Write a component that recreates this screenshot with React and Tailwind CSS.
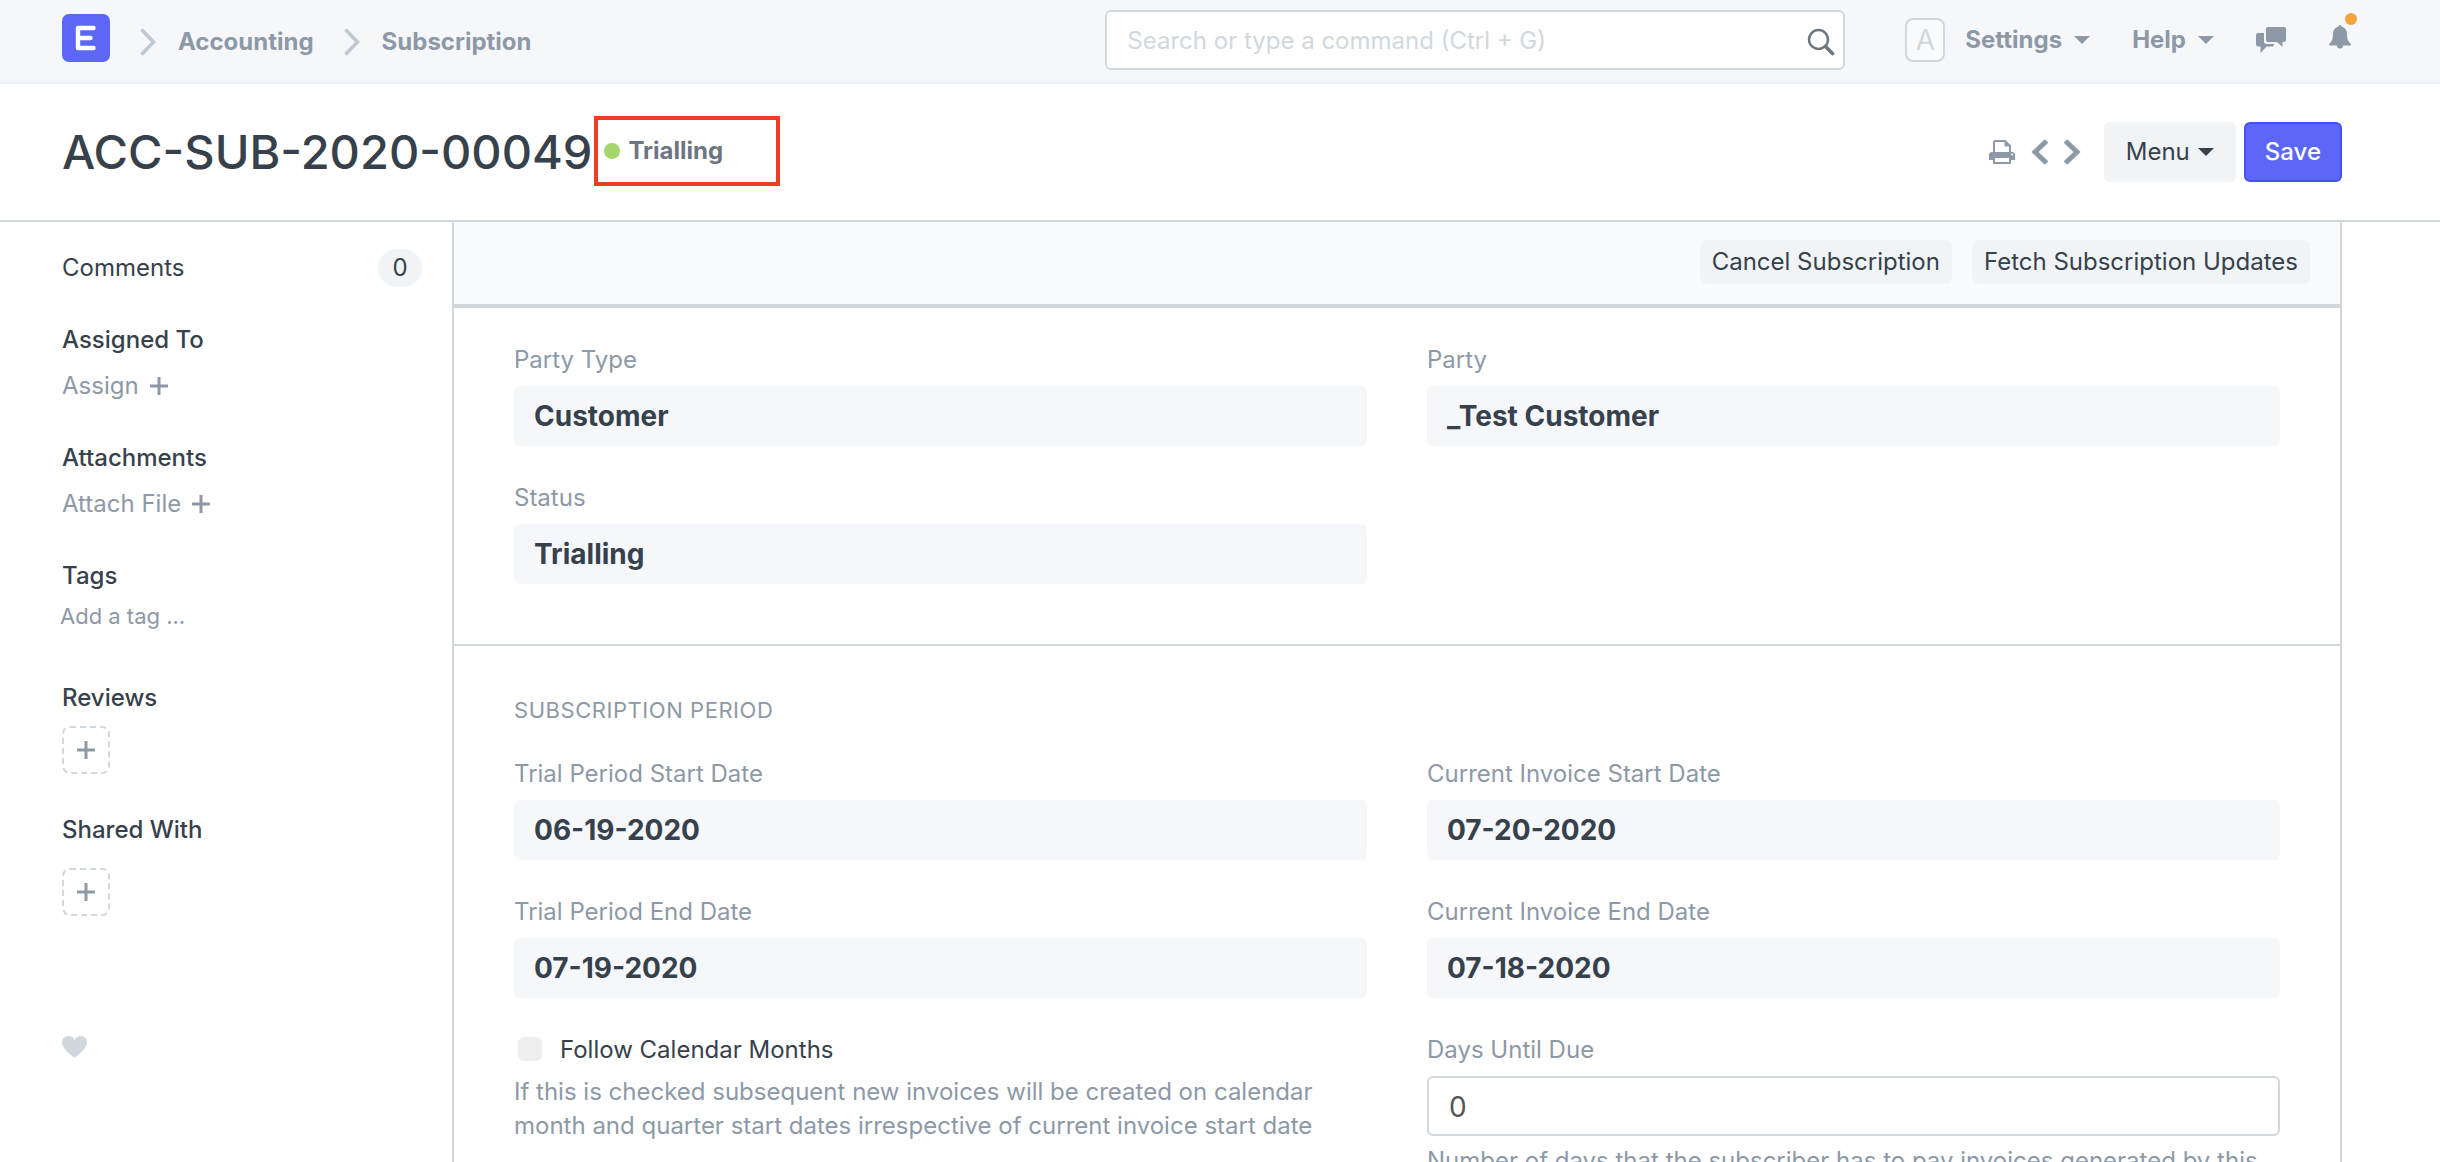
import React from "react";

const Plus = () => (
  <svg viewBox="0 0 18 18" className="size-[18px] text-[#8d99a6]" aria-hidden="true">
    <path d="M9 0v18M0 9h18" stroke="currentColor" strokeWidth="3" />
  </svg>
);

const Caret = () => (
  <svg viewBox="0 0 16 8" className="h-2 w-4" aria-hidden="true">
    <path d="M0 0h16L8 8z" fill="currentColor" />
  </svg>
);

const Crumb = ({ children }) => (
  <>
    <svg viewBox="0 0 16 28" className="h-7 w-4 text-[#c0c9d0]" aria-hidden="true">
      <path d="M1.500 1.500L13.500 14L1.500 26.500" fill="none" stroke="currentColor" strokeWidth="3.6" />
    </svg>
    <a href="#" className="ml-[22px] mr-[30px] font-bold text-[#8d99a6]">{children}</a>
  </>
);

function Navbar() {
  return (
    <header className="flex h-[84px] items-center border-b-2 border-[#ebeff2] bg-[#f5f7fb] pb-0.5 pl-[62px] pr-[89px]">
      <a href="#" aria-label="Home" className="mr-[30px] mb-1">
        <svg viewBox="0 0 48 48" className="size-12">
          <rect width="48" height="48" rx="7" fill="#5c67f7" />
          <path d="M31.500 14H16v20h15.500M16 24h12.500" fill="none" stroke="#fff" strokeWidth="4.4" strokeLinejoin="round" strokeLinecap="round" />
        </svg>
      </a>
      <nav aria-label="Breadcrumb" className="mt-1 flex items-center">
        <Crumb>Accounting</Crumb>
        <Crumb>Subscription</Crumb>
      </nav>
      <div className="relative ml-auto w-[740px]">
        <input
          type="text"
          aria-label="Search"
          placeholder="Search or type a command (Ctrl + G)"
          className="block h-[60px] w-full rounded-md border-2 border-[#d1d8dd] bg-white px-5 placeholder:text-[#d1d8dd]"
        />
        <svg viewBox="0 0 28 28" className="absolute right-2.5 top-[18px] size-7 text-[#6c7680]" aria-hidden="true">
          <circle cx="11.5" cy="11.5" r="9.5" fill="none" stroke="currentColor" strokeWidth="2.4" />
          <path d="M18.5 18.5l7 7" stroke="currentColor" strokeWidth="3.6" strokeLinecap="round" />
        </svg>
      </div>
      <div className="ml-[60px] flex items-center font-bold text-[#8d99a6]">
        <span className="flex h-11 w-10 items-center justify-center rounded-lg border-2 border-[#d1d8dd] bg-[#fafbfc] text-[28px] font-normal text-[#d1d8dd]">A</span>
        <button className="ml-5 flex items-center gap-3">Settings <Caret /></button>
        <button className="ml-[42px] flex items-center gap-3">Help <Caret /></button>
        <button aria-label="Chat" className="ml-[42px]">
          <svg viewBox="0 0 30 26" className="h-[26px] w-[30px]" fill="currentColor">
            <path d="M12 0h16a2 2 0 0 1 2 2v11a2 2 0 0 1-2 2h-1.500v5L21 15h-9a2 2 0 0 1-2-2V2a2 2 0 0 1 2-2z" />
            <path d="M2 6h6v8.500a2.500 2.500 0 0 0 2.500 2.500H18a2 2 0 0 1-2 2.500h-5.500L4.500 26v-6.500H2a2 2 0 0 1-2-2V8a2 2 0 0 1 2-2z" />
          </svg>
        </button>
        <button aria-label="Notifications" className="relative ml-[43px] mb-1.5">
          <svg viewBox="0 0 22 24" className="h-6 w-[22px]" fill="currentColor">
            <path d="M11 0a1.300 1.300 0 0 1 1.300 1.500C16 2.300 17.800 5 18 8.500c.2 5 .6 7.500 2.800 9.200 1.600 1.200 1.400 2.800.2 2.800h-7a3 3 0 0 1-6 0H1c-1.200 0-1.400-1.600.2-2.800C3.400 16 3.800 13.500 4 8.500 4.200 5 6 2.300 9.700 1.500A1.300 1.300 0 0 1 11 0z" />
          </svg>
          <span className="absolute -right-1.5 -top-3 size-3 rounded-full bg-[#f5a33b]" />
        </button>
      </div>
    </header>
  );
}

function PageHead() {
  return (
    <div className="flex h-[138px] items-center border-b-2 border-[#d1d8dd] pl-[62px] pr-[98px]">
      <h1 className="text-[47px] font-medium">ACC-SUB-2020-00049</h1>
      <div className="ml-0.5 mb-0.5 flex h-[70px] w-[186px] items-center gap-2 border-4 border-[#f03e23] pl-1.5 font-bold text-[#6c7680]">
        <span className="size-4 rounded-full bg-[#a6d66b]" />
        Trialling
      </div>
      <div className="ml-auto flex items-center text-[#8d99a6]">
        <button aria-label="Print">
          <svg viewBox="0 0 26 24" className="h-6 w-[26px]">
            <path d="M5 13V2a1 1 0 0 1 1-1h10l5 5v7" fill="#fff" stroke="currentColor" strokeWidth="2" />
            <path d="M15.500 1v4.500a1 1 0 0 0 1 1H21z" fill="currentColor" />
            <path d="M3 12h20a3 3 0 0 1 3 3v5h-4v3a1 1 0 0 1-1 1H5a1 1 0 0 1-1-1v-3H0v-5a3 3 0 0 1 3-3z" fill="currentColor" />
            <path d="M6 18h14v4H6z" fill="#fff" />
            <circle cx="23" cy="14.500" r="1" fill="#fff" />
          </svg>
        </button>
        <button aria-label="Previous" className="ml-4">
          <svg viewBox="0 0 17 26" className="h-[26px] w-[17px]"><path d="M15.500 2L4 13l11.500 11" fill="none" stroke="currentColor" strokeWidth="5" /></svg>
        </button>
        <button aria-label="Next" className="ml-4">
          <svg viewBox="0 0 17 26" className="h-[26px] w-[17px]"><path d="M1.500 2L13 13L1.500 24" fill="none" stroke="currentColor" strokeWidth="5" /></svg>
        </button>
        <button className="ml-[23px] flex h-[60px] items-center gap-2 rounded-md bg-[#f0f4f7] px-[22px] text-[#36414c]">Menu <Caret /></button>
        <button className="ml-2 h-[60px] rounded-md border-2 border-[#4450f5] bg-[#5c67f7] px-[19px] font-medium text-white">Save</button>
      </div>
    </div>
  );
}

const SideHead = ({ children }) => <h2 className="font-medium">{children}</h2>;

const SideAdd = ({ children }) => (
  <button className="mt-3 flex items-center gap-[11px] text-[#8d99a6]">{children} <Plus /></button>
);

const DashedAdd = ({ label }) => (
  <button aria-label={label} className="flex size-12 items-center justify-center rounded-lg border-2 border-dashed border-[#d1d8dd]">
    <Plus />
  </button>
);

function Sidebar() {
  return (
    <aside className="w-[390px] shrink-0 pr-[30px] pt-[29px]">
      <div className="flex items-center justify-between">
        <a href="#">Comments</a>
        <span className="-my-0.5 flex h-[38px] w-11 items-center justify-center rounded-full bg-[#f0f4f7]">0</span>
      </div>
      <div className="mt-[38px]">
        <SideHead>Assigned To</SideHead>
        <SideAdd>Assign</SideAdd>
      </div>
      <div className="mt-[38px]">
        <SideHead>Attachments</SideHead>
        <SideAdd>Attach File</SideAdd>
      </div>
      <div className="mt-[38px]">
        <SideHead>Tags</SideHead>
        <input aria-label="Add a tag" placeholder="Add a tag ..." className="-ml-0.5 mt-1.5 block h-[34px] w-full text-[22px] placeholder:text-[#8d99a6]" />
      </div>
      <div className="mt-12 space-y-[11px]">
        <SideHead>Reviews</SideHead>
        <DashedAdd label="Add a review" />
      </div>
      <div className="mt-[39px] space-y-[21px]">
        <SideHead>Shared With</SideHead>
        <DashedAdd label="Share" />
      </div>
      <button aria-label="Like" className="mt-[120px] block text-[#d1d8dd]">
        <svg viewBox="0 0 24 22" className="h-[22px] w-[25px]" preserveAspectRatio="none" fill="currentColor">
          <path d="M12 22C7 17.500 0 12.500 0 6.500 0 2.800 2.700 0 6.200 0 8.800 0 11 1.600 12 4c1-2.400 3.200-4 5.800-4C21.300 0 24 2.800 24 6.500 24 12.500 17 17.500 12 22z" />
        </svg>
      </button>
    </aside>
  );
}

const Field = ({ label, value }) => (
  <div>
    <div className="mb-[9px] text-[#8d99a6]">{label}</div>
    <div className="flex h-[60px] items-center rounded-md bg-[#f5f7fb] px-5 text-[28px] font-bold">{value}</div>
  </div>
);

const ToolButton = ({ children }) => (
  <button className="h-11 rounded-md bg-[#f0f4f7] px-3">{children}</button>
);

function Form() {
  return (
    <main className="min-w-0 flex-1 border-x-2 border-[#d1d8dd]">
      <div className="flex justify-end gap-5 border-b-4 border-[#d1d8dd] bg-[#fafbfc] px-[30px] pt-[18px] pb-5">
        <ToolButton>Cancel Subscription</ToolButton>
        <ToolButton>Fetch Subscription Updates</ToolButton>
      </div>
      <section className="grid grid-cols-2 gap-x-[60px] gap-y-[35px] border-b-2 border-[#d1d8dd] px-[60px] pt-[35px] pb-[60px]">
        <Field label="Party Type" value="Customer" />
        <Field label="Party" value="_Test Customer" />
        <Field label="Status" value="Trialling" />
      </section>
      <section className="px-[60px] pt-[47px]">
        <h2 className="mb-[30px] text-[22px] leading-[34px] tracking-wide text-[#8d99a6] uppercase">Subscription Period</h2>
        <div className="grid grid-cols-2 gap-x-[60px] gap-y-[35px]">
          <Field label="Trial Period Start Date" value="06-19-2020" />
          <Field label="Current Invoice Start Date" value="07-20-2020" />
          <Field label="Trial Period End Date" value="07-19-2020" />
          <Field label="Current Invoice End Date" value="07-18-2020" />
          <div>
            <label className="flex items-center">
              <input type="checkbox" className="mr-[18px] mb-0.5 ml-1 size-6 appearance-none rounded-md bg-[#eee]" />
              Follow Calendar Months
            </label>
            <p className="mt-2 text-[#8d99a6]">
              If this is checked subsequent new invoices will be created on calendar month and quarter start dates irrespective of current invoice start date
            </p>
          </div>
          <div>
            <label htmlFor="days" className="mb-[9px] block text-[#8d99a6]">Days Until Due</label>
            <input id="days" type="text" defaultValue="0" className="block h-[60px] w-full rounded-md border-2 border-[#d1d8dd] px-5 pt-0.5 text-[28px] text-[#555]" />
            <p className="mt-2 text-[#8d99a6]">
              Number of days that the subscriber has to pay invoices generated by this subscription
            </p>
          </div>
        </div>
      </section>
    </main>
  );
}

export default function App() {
  return (
    <div className="h-screen overflow-hidden bg-white font-['Inter',sans-serif] text-2xl leading-[34px] text-[#36414c]">
      <Navbar />
      <PageHead />
      <div className="flex min-h-screen items-stretch pl-[62px] pr-[98px]">
        <Sidebar />
        <Form />
      </div>
    </div>
  );
}
